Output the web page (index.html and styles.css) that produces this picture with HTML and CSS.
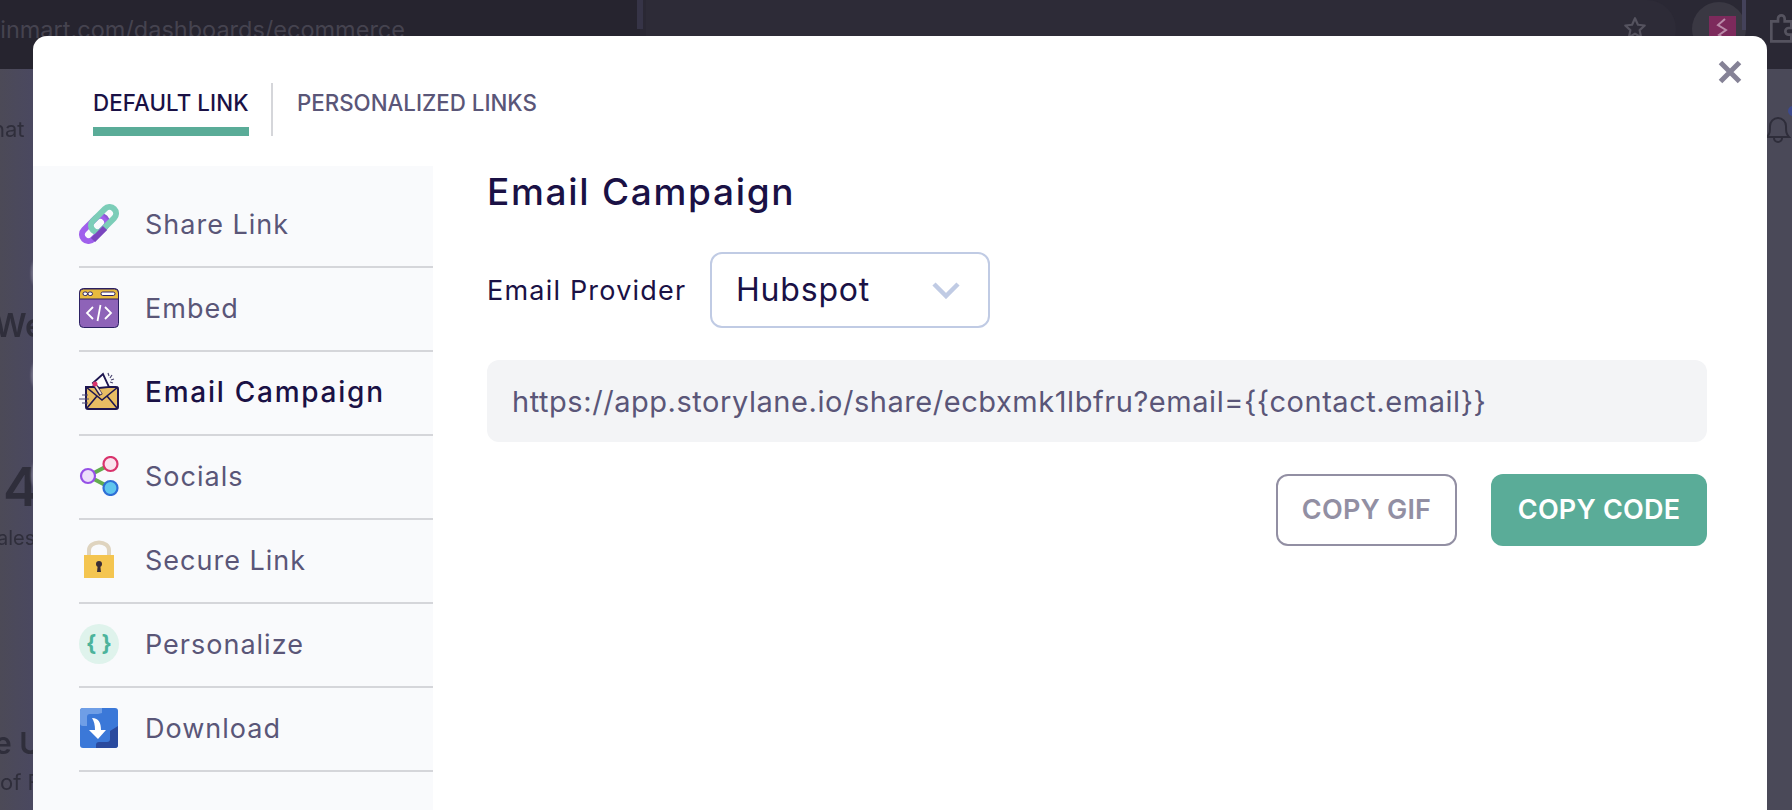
FILE: index.html
```html
<!DOCTYPE html>
<html lang="en">
<head>
<meta charset="utf-8">
<title>Share demo</title>
<link rel="stylesheet" href="styles.css">
</head>
<body>
<div class="behind">
  <header class="browser">
    <span class="address">ainmart.com/dashboards/ecommerce</span>
    <span class="divider-tab"></span>
    <span class="omnibox"></span>
    <svg class="star" viewBox="0 0 24 24" width="26" height="26"><path d="M12 3l2.700 6 6.300.7-4.700 4.300 1.300 6.500L12 17.200l-5.600 3.300 1.300-6.500L3 9.700 9.300 9z" fill="none" stroke="#55535f" stroke-width="2" stroke-linejoin="round"/></svg>
    <span class="avatar"><svg class="avatar-logo" viewBox="0 0 27 27"><rect width="27" height="27" fill="#7d2a5c"/><path d="M16 3l-7 6 8 5-7 5 6 4" fill="none" stroke="#b98aa8" stroke-width="2"/></svg></span>
    <span class="toolbar-line"></span>
    <svg class="puzzle" viewBox="0 0 24 24" width="32" height="32"><path d="M4 7h5V5a2.500 2.500 0 015 0v2h5v5h-2a2.500 2.500 0 000 5h2v5H4z" fill="none" stroke="#55535f" stroke-width="2"/></svg>
  </header>
  <span class="ghost ghost-hat">hat</span>
  <span class="ghost ghost-we">We</span>
  <span class="ghost ghost-four">4</span>
  <span class="ghost ghost-ales">ales</span>
  <span class="ghost ghost-u">e U</span>
  <span class="ghost ghost-of">of F</span>
  <span class="arc arc-one"></span>
  <span class="arc arc-two"></span>
  <span class="arc arc-three"></span>
  <svg class="bell" viewBox="0 0 26 32" width="26" height="32"><path d="M2 24h22c-3-3-3-6-3-11a8 8 0 00-16 0c0 5 0 8-3 11zM9 25a4 4 0 008 0" fill="none" stroke="#2e2d3a" stroke-width="2"/></svg>
  <span class="bell-dot"></span>
</div>

<main class="modal">
  <button class="close" aria-label="Close">
    <svg viewBox="0 0 24 24" width="24" height="24"><path d="M2.500 2.500l19 19M21.500 2.500l-19 19" stroke="#858296" stroke-width="5"/></svg>
  </button>

  <nav class="tabs">
    <a class="tab tab-active">DEFAULT LINK</a>
    <span class="tab-sep"></span>
    <a class="tab">PERSONALIZED LINKS</a>
  </nav>

  <div class="body">
    <aside class="side">
      <ul class="menu">
        <li class="item">
          <svg class="icon" viewBox="0 0 40 40"><defs><linearGradient id="chain" gradientUnits="userSpaceOnUse" x1="0" y1="0" x2="32" y2="0"><stop offset=".45" stop-color="#a060ec"/><stop offset=".6" stop-color="#7a46be"/></linearGradient></defs><g fill="none" stroke-width="6"><rect x="-15" y="-6.500" width="30" height="13" rx="6.500" transform="translate(15.500 24.500) rotate(-45)" stroke="url(#chain)"/><rect x="-15" y="-6.500" width="30" height="13" rx="6.500" transform="translate(24.500 15.500) rotate(-45)" stroke="#7ccdb8"/><path d="M14 36L26 24" stroke="#7a46be"/></g></svg>
          <span class="label">Share Link</span>
        </li>
        <li class="item">
          <svg class="icon" viewBox="0 0 40 40"><rect x=".5" y=".5" width="39" height="39" rx="4" fill="#8e63b8" stroke="#2c2163"/><path d="M.5 11V5a4 4 0 014-4h31a4 4 0 014 4v6z" fill="#e7ba3f" stroke="#2c2163"/><rect x="4" y="4" width="4.500" height="3.500" rx="1.700" fill="#fff" stroke="#2c2163"/><rect x="9" y="4" width="4.500" height="3.500" rx="1.700" fill="#fff" stroke="#2c2163"/><rect x="22" y="4" width="14" height="3.500" rx="1.700" fill="#fff" stroke="#2c2163"/><path d="M14 19l-6 6 6 6M26 19l6 6-6 6M21.500 17l-3 16" fill="none" stroke="#fff" stroke-width="1.800"/></svg>
          <span class="label">Embed</span>
        </li>
        <li class="item item-active">
          <svg class="icon" viewBox="0 0 40 40"><path d="M7 15h30a2 2 0 012 2v18a2 2 0 01-2 2H9a2 2 0 01-2-2z" fill="#e8bd63" stroke="#1e1650" stroke-width="2"/><path d="M7 15l16 13 16-13M8 36l10-12M38 36L28 24" fill="none" stroke="#1e1650" stroke-width="1.600"/><path d="M14 11L24 2l6 13-10 1z" fill="#fff" stroke="#1e1650" stroke-width="1.800"/><path d="M15 12l7 11" stroke="#1e1650" stroke-width="4"/><path d="M16 13l6 9" stroke="#f3e0c6" stroke-width="2"/><circle cx="16" cy="12" r="2.500" fill="#d9336c"/><path d="M29 1l1 3M33 3l-2 3M35 7l-3 1M34 11l-3-1M0 27h10M3 23h6M3 31h6" stroke="#4c4670" stroke-width="1.200"/></svg>
          <span class="label">Email Campaign</span>
        </li>
        <li class="item">
          <svg class="icon" viewBox="0 0 40 40"><path d="M9 20L32 8M9 20l23 12" stroke="#63ad4f" stroke-width="4"/><circle cx="9" cy="20" r="7" fill="#ecdffa" stroke="#9550e6" stroke-width="2.200"/><circle cx="31.500" cy="8" r="7" fill="#fae3ee" stroke="#d9336c" stroke-width="2.200"/><circle cx="31.500" cy="32" r="7" fill="#5fc6ee" stroke="#2f6fd6" stroke-width="2.200"/></svg>
          <span class="label">Socials</span>
        </li>
        <li class="item">
          <svg class="icon" viewBox="0 0 40 40"><path d="M10 18V10a10 7.500 0 0120 0v8" fill="none" stroke="#dfd4bf" stroke-width="4"/><rect x="5" y="15" width="30" height="23" fill="#f4c550"/><circle cx="20" cy="24" r="3" fill="#3a2d36"/><path d="M18.800 25h2.400l.8 7h-4z" fill="#3a2d36"/></svg>
          <span class="label">Secure Link</span>
        </li>
        <li class="item">
          <span class="icon braces">{ }</span>
          <span class="label">Personalize</span>
        </li>
        <li class="item">
          <svg class="icon" viewBox="0 0 40 40"><rect x="1" y="0" width="38" height="40" rx="3" fill="#3b78d8"/><path d="M1 3a3 3 0 013-3h19v5l-4 1h-8a3 3 0 00-3 3v9H4a3 3 0 01-3-3z" fill="#6f9ee6"/><path d="M39 18v19a3 3 0 01-3 3H17v-3a3 3 0 013-3h8a3 3 0 003-3v-8z" fill="#2a4a9e"/><path d="M13 10c7 0 9 5 9 12h5l-8 9-9-9h6c0-5-1-9-3-12z" fill="#fff"/></svg>
          <span class="label">Download</span>
        </li>
      </ul>
    </aside>

    <section class="panel">
      <h1 class="title">Email Campaign</h1>
      <div class="provider">
        <label class="provider-label">Email Provider</label>
        <div class="select">
          <span class="select-value">Hubspot</span>
          <svg viewBox="0 0 30 18" width="30" height="18"><path d="M3 3l12 12L27 3" fill="none" stroke="#c0cbe4" stroke-width="4.500"/></svg>
        </div>
      </div>
      <div class="url">https://app.storylane.io/share/ecbxmk1lbfru?email={{contact.email}}</div>
      <div class="actions">
        <button class="btn btn-outline">COPY GIF</button>
        <button class="btn btn-solid">COPY CODE</button>
      </div>
    </section>
  </div>
</main>
</body>
</html>
```
FILE: styles.css
```css
* { box-sizing: border-box; }
html, body { margin: 0; height: 100%; }
body {
  position: relative;
  width: 1792px;
  height: 810px;
  overflow: hidden;
  font-family: Inter, "Noto Sans", sans-serif;
  background: linear-gradient(90deg, #4c4a57 0, #4a4860 33px, #4a4958 1792px);
}

.behind { position: absolute; inset: 0; overflow: hidden; }
.browser {
  position: relative;
  height: 69px;
  background: linear-gradient(90deg, #26242f 640px, #2a2834 640px);
}
.address {
  position: absolute; left: -13px; top: 15px;
  font-size: 23.500px; color: #45434f; white-space: nowrap;
}
.divider-tab { position: absolute; left: 637px; top: 0; width: 6px; height: 29px; background: #363447; }
.omnibox { position: absolute; left: 646px; top: 0; width: 1030px; height: 58px; border-radius: 0 29px 29px 0; background: #2d2b37; }
.star { position: absolute; left: 1622px; top: 15px; }
.avatar {
  position: absolute; left: 1692px; top: 2px;
  width: 54px; height: 54px; border-radius: 50%;
  background: #3a3843; display: flex; align-items: center; justify-content: center;
  padding-left: 6px;
}
.avatar-logo { width: 27px; height: 27px; display: block; }
.toolbar-line { position: absolute; left: 1742px; top: 0; width: 4px; height: 30px; background: #44425a; }
.puzzle { position: absolute; left: 1766px; top: 12px; }
.ghost { position: absolute; color: #2f2e3b; white-space: nowrap; filter: blur(.6px); }
.ghost-hat { left: -8px; top: 116px; font-size: 22px; }
.ghost-we { left: -6px; top: 306px; font-size: 32px; font-weight: 600; }
.ghost-four { left: 3px; top: 454px; font-size: 54px; font-weight: 600; }
.ghost-ales { left: -3px; top: 526px; font-size: 20px; }
.ghost-u { left: -6px; top: 725px; font-size: 30px; font-weight: 600; }
.ghost-of { left: 0; top: 769px; font-size: 22px; }
.arc { position: absolute; left: 31px; width: 14px; height: 30px; border-radius: 50%; background: #77758a; filter: blur(1px); }
.arc-one { top: 258px; }
.arc-two { top: 360px; }
.arc-three { top: 460px; }
.bell { position: absolute; left: 1765px; top: 113px; }
.bell-dot { position: absolute; left: 1788px; top: 106px; width: 10px; height: 10px; border-radius: 50%; background: #3d4a8c; }

.modal {
  position: absolute;
  left: 33px; top: 36px;
  width: 1734px; height: 774px;
  background: #fff;
  border-radius: 14px 14px 0 0;
  display: flex;
  flex-direction: column;
}
.close {
  position: absolute; right: 25px; top: 24px;
  width: 24px; height: 24px; padding: 0; border: 0; background: none; display: block;
}
.close svg { display: block; }

.tabs {
  display: flex;
  height: 100px;
  padding: 47px 0 0 60px;
  flex: none;
}
.tab {
  height: 53px;
  padding-top: 6px;
  font-size: 22.300px; line-height: 28px; font-weight: 500;
  color: #5a5678;
  white-space: nowrap;
}
.tab-active {
  width: 156px;
  color: #1a1145;
  letter-spacing: .1px;
  border-bottom: 9px solid #5aac98;
}
.tab-sep { width: 2px; height: 53px; margin: 0 24px 0 22px; background: #d5d6da; }

.body { display: flex; flex: 1; min-height: 0; padding-top: 30px; }
.side { width: 400px; flex: none; background: #f9fafc; margin-right: 54px; }
.menu { list-style: none; margin: 0; padding: 18px 0 0 46px; }
.item {
  height: 84px;
  padding-bottom: 2px;
  display: flex; align-items: center; gap: 26px;
  border-bottom: 2px solid #d5d6da;
  font-size: 27px;
  letter-spacing: 1px;
  color: #5a5678;
}
.item-active { color: #1a1145; font-weight: 500; font-size: 28px; letter-spacing: 1.750px; }
.icon { width: 40px; height: 40px; flex: none; display: block; }
.label { white-space: nowrap; }
.braces {
  display: flex; align-items: center; justify-content: center;
  border-radius: 50%; background: #dff3ec; color: #4cb39b;
  font-size: 22px; font-weight: 700; letter-spacing: 0; padding-bottom: 3px;
}

.panel { flex: none; width: 1220px; }
.title {
  margin: 4px 0 0;
  font-size: 37px; line-height: 44px; font-weight: 500; letter-spacing: 1.700px; color: #1a1145;
}
.provider { display: flex; align-items: center; gap: 24px; margin-top: 38px; }
.provider-label { font-size: 27px; font-weight: 400; letter-spacing: 1.200px; color: #1a1145; white-space: nowrap; width: 199px; }
.select {
  width: 280px; height: 76px;
  border: 2px solid #c0cbe4; border-radius: 12px;
  display: flex; align-items: center; justify-content: space-between;
  padding: 0 27px 0 24px;
}
.select-value { font-size: 32px; font-weight: 400; letter-spacing: .8px; color: #1a1145; margin-top: -2px; }
.url {
  margin-top: 32px;
  height: 82px;
  border-radius: 12px;
  background: #f3f4f6;
  display: flex; align-items: center;
  padding-left: 25px;
  font-size: 29px; letter-spacing: .55px; color: #5a5678;
  white-space: nowrap;
}
.actions { display: flex; justify-content: flex-end; gap: 34px; margin-top: 32px; }
.btn {
  height: 72px; border-radius: 12px;
  font-family: inherit; font-size: 27px; font-weight: 600; letter-spacing: .2px;
  padding: 0 0 2px;
}
.btn-outline { width: 181px; background: #fff; border: 2px solid #928fa3; color: #928fa3; }
.btn-solid { width: 216px; background: #5aac98; border: 0; color: #fff; }
```
